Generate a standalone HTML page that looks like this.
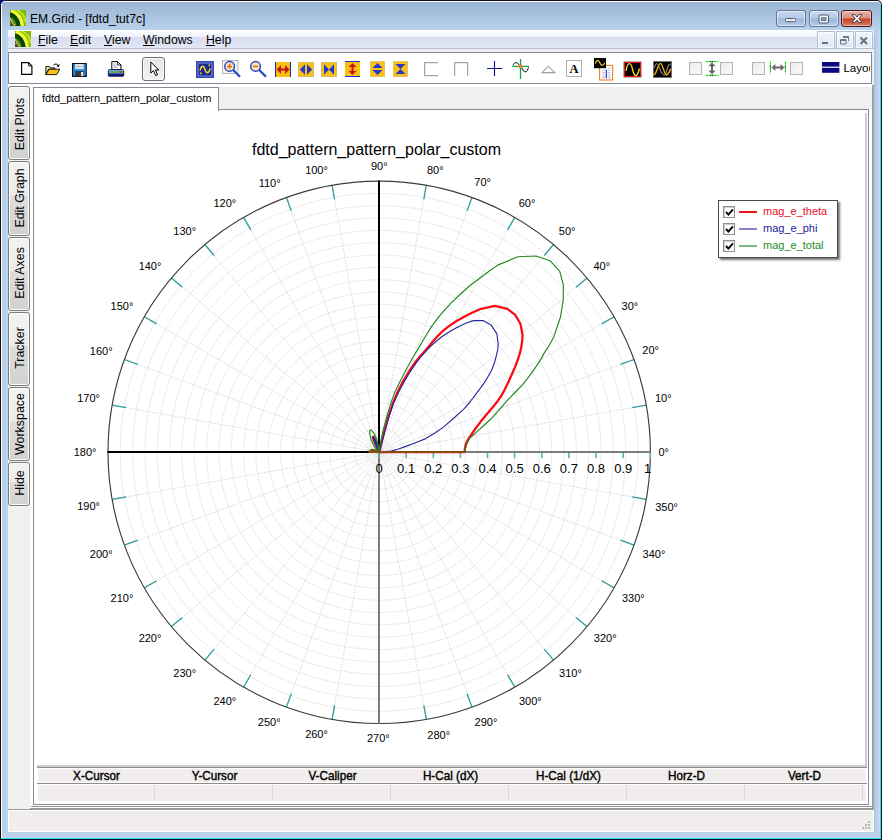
<!DOCTYPE html>
<html lang="en"><head><meta charset="utf-8"><title>EM.Grid - [fdtd_tut7c]</title>
<style>
*{margin:0;padding:0;box-sizing:border-box}
html,body{width:882px;height:840px;overflow:hidden;background:#fff}
body{position:relative;font-family:"Liberation Sans",sans-serif;color:#000}
.a{position:absolute}
#win{left:0;top:0;width:882px;height:840px;background:#111;border-radius:5px 5px 0 0;overflow:hidden}
#tl{left:0;top:0;width:3px;height:4px;background:#000080}
#fr{left:1px;top:1px;width:880px;height:838px;background:#b9d1ea;border-radius:4px 4px 0 0}
#frl{left:1px;top:4px;width:1px;height:834px;background:#fff}
#frt{left:4px;top:1px;width:874px;height:1px;background:#fff}
#frr{left:880px;top:5px;width:1px;height:834px;background:#35d6ff}
#frb{left:1px;top:838px;width:880px;height:1px;background:#35d6ff}
#frlg{left:2px;top:30px;width:6px;height:802px;background:linear-gradient(90deg,#b3cdea,#bfd5ed)}
#frrg{left:874px;top:30px;width:6px;height:802px;background:linear-gradient(90deg,#a9c6e8,#c9dbf0)}
#cap{left:2px;top:2px;width:878px;height:28px;background:linear-gradient(180deg,#99b4d2,#b9d1ea);border-radius:3px 3px 0 0}
#ttl{left:30px;top:12px;font-size:12.15px;line-height:15px;white-space:nowrap;color:#000}
#client{left:8px;top:30px;width:866px;height:802px;background:#f0f0f0}
#menu{left:8px;top:30px;width:866px;height:19px;background:linear-gradient(180deg,#fff 0,#eef1f9 36%,#d8ddf0 37%,#e2e7f6 94%,#b8bccf 95%,#b8bccf 100%)}
.mi{top:33px;font-size:12.25px;line-height:14px;white-space:nowrap}
.mi u{text-decoration:underline;text-underline-offset:1px}
#tb{left:8px;top:52px;width:864px;height:32px;background:#fff;border:1px solid #848993}
#tbw{left:8px;top:84px;width:864px;height:3px;background:#fff}
#rline{left:872px;top:85px;width:2px;height:724px;background:#a0a0a0}
.stab{left:8px;width:22px;border:1px solid #7c7c7c;border-radius:3px;background:linear-gradient(180deg,#f3f3f3 0,#ebebeb 45%,#dedede 47%,#d1d1d1 100%);box-shadow:inset 0 0 0 1px #fbfbfb}
.stab span{position:absolute;left:calc(50% + 1px);top:50%;white-space:nowrap;font-size:12.4px;line-height:14px;transform:translate(-50%,-50%) rotate(-90deg)}
#strip{left:30px;top:87px;width:3px;height:720px;background:#fff}
#tab{left:33px;top:87px;width:186px;height:24px;background:#fff;border:1px solid #868b98;border-bottom:none}
#tabt{left:42px;top:92px;font-size:11px;line-height:13px;white-space:nowrap;letter-spacing:-0.06px}
#pane{left:33px;top:109px;width:836px;height:696px;background:#fff;border:1px solid #868b98}
#panefix{left:34px;top:109px;width:184px;height:2px;background:#fff}
#paner{left:869px;top:109px;width:3px;height:698px;background:#fff}
#paneb{left:30px;top:805px;width:842px;height:3px;background:#fff}
#paneb2{left:31px;top:806px;width:841px;height:1px;background:#929292}
#paneg{left:30px;top:808px;width:844px;height:2px;background:#9a9a9a}
#paneg2{left:8px;top:809px;width:22px;height:1px;background:#9a9a9a}
#vbar{left:865px;top:113px;width:2px;height:654px;background:#cdcdcd}
#sb{left:8px;top:810px;width:866px;height:22px;background:#f0edec;border:1px solid #fff}
#grip i{position:absolute;width:2px;height:2px;background:#b8b8b8}
/* cursor table */
#ct1{left:37px;top:765px;width:830px;height:2px;background:#cdcdcd}
#ct2{left:37px;top:767px;width:830px;height:1px;background:#8c8c8c}
#cth{left:38px;top:769px;width:828px;height:13px;background:#f0edec}
#ct3{left:37px;top:783px;width:830px;height:1px;background:#8c8c8c}
#ctr{left:38px;top:785px;width:828px;height:16px;background:#f0edec}
.ch{top:769px;width:118px;text-align:center;font-size:11.7px;line-height:13px;white-space:nowrap;-webkit-text-stroke:.38px #000;transform:translateY(.1px) scaleY(1.08);transform-origin:50% 80%}
.cs{top:785px;width:1px;height:16px;background:#d8d6d5}

#lg{left:718px;top:200px;width:120px;height:58px;background:#fff;border:1px solid #4a4a4a;box-shadow:2px 2px 2px rgba(0,0,0,.55)}
.lc{left:723px;width:12px;height:12px;border:1px solid #8e8f8f;background:#fff;box-shadow:inset 1px 1px 0 #d0d0d0}
.lc svg{position:absolute;left:1px;top:1px}
.ll{left:739px;width:18px}
.lt{left:763px;font-size:11px;line-height:13px;white-space:nowrap}

#ptr{left:142px;top:57px;width:23px;height:24px;border:1px solid #6e6e6e;border-radius:3px;background:linear-gradient(180deg,#e6e6e6,#f2f2f2);box-shadow:inset 0 0 0 1px #fafafa}
.dbx{top:62px;width:13px;height:13px;border:1px solid #b4b4b4;background:linear-gradient(135deg,#ececec,#fafafa)}
#lay{left:843.4px;top:60px;width:27px;overflow:hidden;font-size:11.6px;line-height:15px;white-space:nowrap}
.cb{top:10px;height:17px;border-radius:3px}
.mb{top:31px;width:18px;height:18px;border:1px solid #aebfd6;background:linear-gradient(180deg,#f0f5fc,#dde8f6);box-shadow:inset 0 0 0 1px rgba(255,255,255,.7)}
</style></head>
<body>
<div id="win" class="a"></div><div id="tl" class="a"></div>
<div id="fr" class="a"></div><div id="frl" class="a"></div><div id="frt" class="a"></div><div id="frr" class="a"></div><div id="frb" class="a"></div>
<div id="cap" class="a"></div><div id="frlg" class="a"></div><div id="frrg" class="a"></div>
<div id="client" class="a"></div>
<div id="ttl" class="a">EM.Grid - [fdtd_tut7c]</div>
<div id="menu" class="a"></div>
<div class="a mi" style="left:38px"><u>F</u>ile</div>
<div class="a mi" style="left:70px"><u>E</u>dit</div>
<div class="a mi" style="left:104px"><u>V</u>iew</div>
<div class="a mi" style="left:143px"><u>W</u>indows</div>
<div class="a mi" style="left:206px"><u>H</u>elp</div>
<div id="tb" class="a"></div><div id="tbw" class="a"></div><div id="rline" class="a"></div>
<div class="a stab" style="top:86px;height:74px"><span style="margin-top:0.5px">Edit Plots</span></div>
<div class="a stab" style="top:161px;height:75px"><span style="margin-top:-0.6px">Edit Graph</span></div>
<div class="a stab" style="top:237px;height:74px"><span style="margin-top:-1.5px">Edit Axes</span></div>
<div class="a stab" style="top:312px;height:74px"><span style="margin-top:-1.4px">Tracker</span></div>
<div class="a stab" style="top:387px;height:74px"><span style="margin-top:-0.5px">Workspace</span></div>
<div class="a stab" style="top:462px;height:44px"><span style="margin-top:-1.2px">Hide</span></div>
<div id="strip" class="a"></div>
<div id="pane" class="a"></div><div id="tab" class="a"></div><div id="panefix" class="a"></div><div id="tabt" class="a">fdtd_pattern_pattern_polar_custom</div>
<div id="paner" class="a"></div><div id="paneb" class="a"></div><div id="paneb2" class="a"></div><div id="paneg" class="a"></div><div id="paneg2" class="a"></div><div id="vbar" class="a"></div>
<div id="sb" class="a"></div>
<div id="grip" class="a" style="left:860px;top:819px;width:12px;height:12px"><i style="left:8px;top:2px"></i><i style="left:5px;top:5px"></i><i style="left:8px;top:5px"></i><i style="left:2px;top:8px"></i><i style="left:5px;top:8px"></i><i style="left:8px;top:8px"></i></div>
<div id="ct1" class="a"></div><div id="ct2" class="a"></div><div id="cth" class="a"></div><div id="ct3" class="a"></div><div id="ctr" class="a"></div>
<div class="a ch" style="left:37.5px">X-Cursor</div>
<div class="a cs" style="left:154px"></div>
<div class="a ch" style="left:155.5px">Y-Cursor</div>
<div class="a cs" style="left:272px"></div>
<div class="a ch" style="left:273.5px">V-Caliper</div>
<div class="a cs" style="left:390px"></div>
<div class="a ch" style="left:391.5px">H-Cal (dX)</div>
<div class="a cs" style="left:508px"></div>
<div class="a ch" style="left:509.5px">H-Cal (1/dX)</div>
<div class="a cs" style="left:626px"></div>
<div class="a ch" style="left:627.5px">Horz-D</div>
<div class="a cs" style="left:744px"></div>
<div class="a ch" style="left:745.5px">Vert-D</div>
<div class="a cs" style="left:862px"></div>
<svg class="a" style="left:10px;top:10px" width="16" height="16" viewBox="0 0 16 16" ><defs><linearGradient id="ga" x1="0" y1="1" x2="1" y2="0"><stop offset="0" stop-color="#4a6a0c"/><stop offset=".3" stop-color="#6a8c10"/><stop offset=".6" stop-color="#9acc10"/><stop offset="1" stop-color="#78b000"/></linearGradient></defs><rect width="16" height="16" fill="url(#ga)"/><path d="M0 4.6 Q7.6 6 8.8 16" fill="none" stroke="#064408" stroke-width="4.6"/><path d="M1.2 .4 Q11.6 4.6 12.4 16" fill="none" stroke="#f0fa38" stroke-width="3.4"/><path d="M3.6 0 Q13.4 4.6 14.2 15" fill="none" stroke="#9cc414" stroke-width=".7"/><path d="M7 0 Q15 4 15.8 12" fill="none" stroke="#d4ec30" stroke-width="1.2"/><path d="M0 8.4 L5 16" stroke="#f0f4e8" stroke-width="1.1" stroke-dasharray="1.3 1"/><rect x="0" y="14.4" width="2.4" height="1.6" fill="#3a3a30"/></svg>
<svg class="a" style="left:15px;top:31px" width="16" height="16" viewBox="0 0 16 16" ><defs><linearGradient id="gb" x1="0" y1="1" x2="1" y2="0"><stop offset="0" stop-color="#4a6a0c"/><stop offset=".3" stop-color="#6a8c10"/><stop offset=".6" stop-color="#9acc10"/><stop offset="1" stop-color="#78b000"/></linearGradient></defs><rect width="16" height="16" fill="url(#gb)"/><path d="M0 4.6 Q7.6 6 8.8 16" fill="none" stroke="#064408" stroke-width="4.6"/><path d="M1.2 .4 Q11.6 4.6 12.4 16" fill="none" stroke="#f0fa38" stroke-width="3.4"/><path d="M3.6 0 Q13.4 4.6 14.2 15" fill="none" stroke="#9cc414" stroke-width=".7"/><path d="M7 0 Q15 4 15.8 12" fill="none" stroke="#d4ec30" stroke-width="1.2"/><path d="M0 8.4 L5 16" stroke="#f0f4e8" stroke-width="1.1" stroke-dasharray="1.3 1"/><rect x="0" y="14.4" width="2.4" height="1.6" fill="#3a3a30"/></svg>
<div class="a cb" style="left:776px;width:30px;border:1px solid #62789a;background:linear-gradient(180deg,#c9daef 0,#b6cbe6 46%,#9cb7da 52%,#b4cae7 100%);box-shadow:inset 0 0 0 1px rgba(255,255,255,.5)"></div>
<div class="a cb" style="left:809px;width:30px;border:1px solid #62789a;background:linear-gradient(180deg,#c9daef 0,#b6cbe6 46%,#9cb7da 52%,#b4cae7 100%);box-shadow:inset 0 0 0 1px rgba(255,255,255,.5)"></div>
<div class="a cb" style="left:841px;width:31px;border:1px solid #4a1624;background:linear-gradient(180deg,#eab0a6 0,#dd8e7e 48%,#c4401e 52%,#d97f68 100%);box-shadow:inset 0 0 0 1px rgba(255,255,255,.45)"></div>
<svg class="a" style="left:785px;top:15px" width="12" height="8" viewBox="0 0 12 8" ><rect x=".5" y="3.5" width="10" height="3.2" rx="1" fill="#f4f4f4" stroke="#4a5a74" stroke-width="1"/></svg>
<svg class="a" style="left:818px;top:13.6px" width="12" height="11" viewBox="0 0 12 11" ><rect x="1" y="1" width="9.5" height="8" rx="1" fill="#f4f4f4" stroke="#4a5a74"/><rect x="3.6" y="3.8" width="4.3" height="2.6" fill="#8fa9cc" stroke="#4a5a74" stroke-width=".9"/></svg>
<svg class="a" style="left:850px;top:13px" width="14" height="11" viewBox="0 0 14 11" ><path d="M2 1.5 L5 1.5 L7 4 L9 1.5 L12 1.5 L8.8 5.5 L12 9.5 L9 9.5 L7 7 L5 9.5 L2 9.5 L5.2 5.5 Z" fill="#f6f6f6" stroke="#4a4a5c" stroke-width="1"/></svg>
<div class="a mb" style="left:817px"></div>
<div class="a mb" style="left:836px"></div>
<div class="a mb" style="left:855px"></div>
<svg class="a" style="left:821px;top:40px" width="10" height="6" viewBox="0 0 10 6" ><rect x="1" y="2" width="6" height="2" fill="#6a7080"/></svg>
<svg class="a" style="left:839px;top:35px" width="12" height="11" viewBox="0 0 12 11" ><path d="M4 1.5 H9.5 V6 M1.5 4.5 H7 V9 H1.5 Z M1.5 5.5 H7 M4 2.5 H9.5" fill="none" stroke="#707888" stroke-width="1"/></svg>
<svg class="a" style="left:859px;top:36px" width="10" height="10" viewBox="0 0 10 10" ><path d="M1.5 1.5 L8 8 M8 1.5 L1.5 8" stroke="#6a7080" stroke-width="2"/></svg>
<svg class="a" style="left:21px;top:62px" width="12" height="14" viewBox="0 0 12 14" ><path d="M.6 .6 H7.6 L10.9 3.9 V12.4 H.6 Z" fill="#fff" stroke="#000" stroke-width="1.15"/><path d="M7.6 .6 V3.9 H10.9" fill="none" stroke="#000" stroke-width=".9"/></svg>
<svg class="a" style="left:45px;top:61.6px" width="18" height="16" viewBox="0 0 18 16" ><g transform="scale(.9)"><path d="M1 5 H5 L6 6.5 H11 V8 H4 L1 14 Z" fill="#f8e9a8" stroke="#000" stroke-width="1"/><path d="M1 14 L4.5 8 H16.5 L13 14 Z" fill="#f8c414" stroke="#000" stroke-width="1"/><path d="M9.5 3.5 Q12.5 .5 15 4.3" fill="none" stroke="#000" stroke-width="1.1"/><path d="M16.2 2.2 L15.6 5.6 L12.6 4.6 Z" fill="#000"/></g></svg>
<svg class="a" style="left:72px;top:63px" width="15" height="14" viewBox="0 0 15 14" ><rect x=".6" y=".6" width="13.6" height="12.8" fill="#2296f4" stroke="#0a0a30" stroke-width="1.2"/><rect x="3" y="1" width="8.6" height="5" fill="#e4e4e4"/><rect x="3" y="2.6" width="8.6" height="1.6" fill="#c4c4c4"/><rect x="3" y="8" width="9" height="5.4" fill="#3a3a3a"/><rect x="9.2" y="9" width="2" height="4" fill="#fff"/></svg>
<svg class="a" style="left:107px;top:61px" width="18" height="16" viewBox="0 0 18 16" ><path d="M4.8 .6 H10.6 L14 4 V8.6 H4.8 Z" fill="#fff" stroke="#000" stroke-width="1"/><path d="M10.6 .6 V4 H14" fill="none" stroke="#000" stroke-width=".8"/><path d="M6.4 3 H8.6 M6.4 4.8 H10 M6.4 6.6 H11" stroke="#909090" stroke-width=".8"/><rect x=".8" y="8.2" width="16.4" height="7.5" rx="1.6" fill="#12125e"/><rect x="1.6" y="9" width="14.8" height="1.5" fill="#48b4e4"/><rect x="1.6" y="10.5" width="14.8" height="1.3" fill="#b8d428"/><rect x="1.6" y="11.8" width="14.8" height="1.4" fill="#2868d8"/><rect x="12" y="10.3" width="3" height="1.3" fill="#e83030"/></svg>
<div id="ptr" class="a"></div>
<svg class="a" style="left:150px;top:61px" width="11" height="17" viewBox="0 0 11 17" ><path d="M.8 1 V12 L3.5 9.6 L5.7 14.6 L7.5 13.8 L5.4 9 H8.8 Z" fill="#fff" stroke="#000" stroke-width="1" stroke-linejoin="miter"/></svg>
<svg class="a" style="left:196px;top:61px" width="18" height="17" viewBox="0 0 18 17" ><rect x=".5" y=".5" width="17" height="16" fill="#1c2894" stroke="#3848c8"/><rect x="2" y="2" width="14" height="13" fill="none" stroke="#98a4e8" stroke-width=".9"/><path d="M4 9.5 C5.5 4 7.5 4 9 8.5 S12.5 13 14.2 7.5" fill="none" stroke="#f8e020" stroke-width="1.4"/><rect x="12.5" y="3.5" width="1.6" height="1.6" fill="#f8e020"/><rect x="4" y="11.5" width="1.6" height="1.6" fill="#f8e020"/></svg>
<svg class="a" style="left:222px;top:60px" width="20" height="19" viewBox="0 0 20 19" ><rect x=".5" y=".5" width="15.5" height="13" fill="#f2f2f2" stroke="#b8b8b8"/><circle cx="7.6" cy="6.4" r="4.8" fill="#f8e8c0" stroke="#2a48c0" stroke-width="1.5"/><path d="M5 6.4 H10.2 M7.6 3.8 V9" stroke="#e86810" stroke-width="1.5"/><path d="M11.2 10 L18 16.8" stroke="#2a48c0" stroke-width="2.3"/></svg>
<svg class="a" style="left:248px;top:60px" width="20" height="19" viewBox="0 0 20 19" ><circle cx="7.6" cy="6.4" r="4.8" fill="#f8e8c0" stroke="#2a48c0" stroke-width="1.5"/><path d="M5 6.4 H10.2" stroke="#e86810" stroke-width="1.5"/><path d="M11.2 10 L18 16.8" stroke="#2a48c0" stroke-width="2.3"/></svg>
<svg class="a" style="left:275px;top:62px" width="16" height="15" viewBox="0 0 16 15" ><rect width="16" height="15" fill="#fcc010"/><path d="M.5 0 V15 M15.5 0 V15" stroke="#2030c0" stroke-width="1.2"/><path d="M1.6 7.5 L6 3 V6.4 H10 V3 L14.4 7.5 L10 12 V8.6 H6 V12 Z" fill="#c01818"/></svg>
<svg class="a" style="left:298px;top:62px" width="16" height="15" viewBox="0 0 16 15" ><rect width="16" height="15" fill="#fcc010" stroke="#b8b8b8"/><path d="M7 2.2 V12.8 L1.8 7.5 Z M9 2.2 V12.8 L14.2 7.5 Z" fill="#2438d0"/></svg>
<svg class="a" style="left:321px;top:62px" width="16" height="15" viewBox="0 0 16 15" ><rect width="16" height="15" fill="#fcc010" stroke="#b8b8b8"/><path d="M3 2.2 L8 7.5 L3 12.8 Z M13 2.2 L8 7.5 L13 12.8 Z" fill="#2438d0"/></svg>
<svg class="a" style="left:345px;top:61px" width="15" height="16" viewBox="0 0 15 16" ><rect width="15" height="16" fill="#fcc010"/><path d="M0 .5 H15 M0 15.5 H15" stroke="#2030c0" stroke-width="1.2"/><path d="M7.5 2 L11.5 6 H8.5 V10 H11.5 L7.5 14 L3.5 10 H6.5 V6 H3.5 Z" fill="#c01818"/></svg>
<svg class="a" style="left:370px;top:61px" width="15" height="16" viewBox="0 0 15 16" ><rect width="15" height="16" fill="#fcc010" stroke="#c8c8c8"/><path d="M2.5 7 H12.5 L7.5 2 Z M2.5 9 H12.5 L7.5 14 Z" fill="#2438d0"/></svg>
<svg class="a" style="left:393px;top:61px" width="15" height="16" viewBox="0 0 15 16" ><rect width="15" height="16" fill="#fcc010" stroke="#c8c8c8"/><path d="M2.5 3 L7.5 8 L12.5 3 Z M2.5 13 L7.5 8 L12.5 13 Z" fill="#2438d0"/></svg>
<svg class="a" style="left:424px;top:62px" width="15" height="15" viewBox="0 0 15 15" ><path d="M14 .6 H.6 V13.6 H14" fill="none" stroke="#a4a4a4" stroke-width="1.2"/></svg>
<svg class="a" style="left:454px;top:62px" width="15" height="15" viewBox="0 0 15 15" ><path d="M.6 14 V.6 H13.6 V14" fill="none" stroke="#a4a4a4" stroke-width="1.2"/></svg>
<svg class="a" style="left:487px;top:61px" width="16" height="16" viewBox="0 0 16 16" ><path d="M0 7.5 H15.4 M7.5 0 V15" stroke="#10108c" stroke-width="1.15"/></svg>
<svg class="a" style="left:512px;top:59px" width="18" height="21" viewBox="0 0 18 21" ><path d="M8.5 0 V20 M0 7.4 H17" stroke="#18a048" stroke-width="1.3"/><path d="M1 6 Q3.5 1.5 7 5.5 T11.5 12 Q14.5 15 16.5 8.5" fill="none" stroke="#101010" stroke-width="1"/><rect x="6.8" y="5.6" width="3.4" height="3.4" fill="#f08018"/></svg>
<svg class="a" style="left:541px;top:65px" width="15" height="9" viewBox="0 0 15 9" ><path d="M1 7.6 L7.4 1.2 L13.8 7.6 Z" fill="#fff" stroke="#a0a0a0" stroke-width="1.1"/></svg>
<svg class="a" style="left:566px;top:60px" width="16" height="17" viewBox="0 0 16 17" ><rect x=".5" y=".5" width="15" height="16" fill="#fff" stroke="#b0b0b0"/><text x="8" y="13" font-family="Liberation Serif, serif" font-weight="bold" font-size="12.5" text-anchor="middle" fill="#000">A</text></svg>
<svg class="a" style="left:594px;top:58px" width="20" height="23" viewBox="0 0 20 23" ><rect x="5.6" y="7.4" width="13" height="14.6" fill="#fff" stroke="#f08030" stroke-width="1.1"/><path d="M8 12.5 H11 M8 14.5 H11 M8 16.5 H11 M8 18.5 H11 M8 20 H11 M13.6 10.5 H16.6 M13.6 12.5 H16.6 M13.6 14.5 H16.6 M13.6 16.5 H16.6 M13.6 18.5 H16.6 M13.6 20 H16.6" stroke="#b4bcd4" stroke-width=".8"/><path d="M12.3 11.5 V20.5" stroke="#2030d0" stroke-width="1.1"/><rect x="0" y="0" width="12" height="10.2" fill="#000"/><path d="M1.3 5.6 C2.6 1.4 4.6 1.6 5.8 4.8 S9.4 8.6 10.8 4.6" fill="none" stroke="#f8d020" stroke-width="1.25"/></svg>
<svg class="a" style="left:623px;top:61px" width="19" height="17" viewBox="0 0 19 17" ><rect x=".5" y=".5" width="18" height="16" fill="#808080"/><rect x="1.5" y="1.5" width="16" height="14" fill="#000" stroke="#e01818" stroke-width="1.2"/><path d="M3 10 C4.5 .5 7.8 .5 9.6 8.5 S14.4 17 16.3 7.5" fill="none" stroke="#f8e020" stroke-width="1.3"/></svg>
<svg class="a" style="left:653px;top:61px" width="19" height="17" viewBox="0 0 19 17" ><rect x=".5" y=".5" width="18" height="16" fill="#000" stroke="#707070"/><path d="M1.4 6.5 C2.4 2 4.2 1.6 5.4 4.5 C6.8 8 9.2 14.5 11.6 14 C13.6 13.6 14.6 4 16.3 3.1 L17.7 3.8" fill="none" stroke="#b0b0b0" stroke-width="1"/><path d="M1.4 14 C3.4 12 5.4 2.2 7.5 2.4 C9.6 2.6 11.4 14 13.6 14 C15 14 16.6 10.4 17.7 7.9" fill="none" stroke="#f8b010" stroke-width="1.4"/></svg>
<div class="a dbx" style="left:689px"></div>
<svg class="a" style="left:705px;top:60px" width="14" height="17" viewBox="0 0 14 17" ><path d="M.6 1.6 H13.4 M.6 15.4 H13.4" stroke="#20dc20" stroke-width="1.1" stroke-dasharray="3 .8"/><path d="M5 1.6 H9 M5 15.4 H9" stroke="#203020" stroke-width="1.1" stroke-dasharray="1 1"/><path d="M7 2.4 L10.6 6.2 H8 V10.4 H10.6 L7 14.2 L3.4 10.4 H6 V6.2 H3.4 Z" fill="#686868"/></svg>
<div class="a dbx" style="left:720px"></div>
<div class="a dbx" style="left:752px"></div>
<svg class="a" style="left:769px;top:60px" width="18" height="15" viewBox="0 0 18 15" ><path d="M1.4 1.4 V13.8 M16.4 1.4 V13.8" stroke="#20dc20" stroke-width="1.1" stroke-dasharray="3 .8"/><path d="M1.4 5.5 V9.5 M16.4 5.5 V9.5" stroke="#203020" stroke-width="1.1" stroke-dasharray="1 1"/><path d="M2.6 7.5 L6.4 3.9 V6.5 H11.6 V3.9 L15.4 7.5 L11.6 11.1 V8.5 H6.4 V11.1 Z" fill="#686868"/></svg>
<div class="a dbx" style="left:790px"></div>
<svg class="a" style="left:822px;top:62px" width="18" height="11" viewBox="0 0 18 11" ><rect x="0" y="0" width="17.4" height="4.6" fill="#0a0a80"/><rect x="0" y="5.8" width="17.4" height="5" fill="#0a0a80"/></svg>
<div id="lay" class="a">Layout</div>
<svg class="a" id="plot" style="left:0;top:0" width="882" height="840" viewBox="0 0 882 840" font-family="Liberation Sans, sans-serif">
<g fill="none" stroke="#d2d2d2" stroke-width="1" stroke-dasharray="1 1.15">
<circle cx="379.2" cy="452.3" r="12.33"/>
<circle cx="379.2" cy="452.3" r="24.65"/>
<circle cx="379.2" cy="452.3" r="36.98"/>
<circle cx="379.2" cy="452.3" r="49.31"/>
<circle cx="379.2" cy="452.3" r="61.64"/>
<circle cx="379.2" cy="452.3" r="73.96"/>
<circle cx="379.2" cy="452.3" r="86.29"/>
<circle cx="379.2" cy="452.3" r="98.62"/>
<circle cx="379.2" cy="452.3" r="110.95"/>
<circle cx="379.2" cy="452.3" r="123.27"/>
<circle cx="379.2" cy="452.3" r="135.60"/>
<circle cx="379.2" cy="452.3" r="147.93"/>
<circle cx="379.2" cy="452.3" r="160.25"/>
<circle cx="379.2" cy="452.3" r="172.58"/>
<circle cx="379.2" cy="452.3" r="184.91"/>
<circle cx="379.2" cy="452.3" r="197.24"/>
<circle cx="379.2" cy="452.3" r="209.56"/>
<circle cx="379.2" cy="452.3" r="221.89"/>
<circle cx="379.2" cy="452.3" r="234.22"/>
<circle cx="379.2" cy="452.3" r="246.55"/>
<circle cx="379.2" cy="452.3" r="258.87"/>
<line x1="379.2" y1="452.3" x2="646.3" y2="405.2"/>
<line x1="379.2" y1="452.3" x2="634.0" y2="359.5"/>
<line x1="379.2" y1="452.3" x2="614.1" y2="316.7"/>
<line x1="379.2" y1="452.3" x2="587.0" y2="278.0"/>
<line x1="379.2" y1="452.3" x2="553.5" y2="244.5"/>
<line x1="379.2" y1="452.3" x2="514.8" y2="217.4"/>
<line x1="379.2" y1="452.3" x2="472.0" y2="197.5"/>
<line x1="379.2" y1="452.3" x2="426.3" y2="185.2"/>
<line x1="379.2" y1="452.3" x2="332.1" y2="185.2"/>
<line x1="379.2" y1="452.3" x2="286.4" y2="197.5"/>
<line x1="379.2" y1="452.3" x2="243.6" y2="217.4"/>
<line x1="379.2" y1="452.3" x2="204.9" y2="244.5"/>
<line x1="379.2" y1="452.3" x2="171.4" y2="278.0"/>
<line x1="379.2" y1="452.3" x2="144.3" y2="316.7"/>
<line x1="379.2" y1="452.3" x2="124.4" y2="359.5"/>
<line x1="379.2" y1="452.3" x2="112.1" y2="405.2"/>
<line x1="379.2" y1="452.3" x2="112.1" y2="499.4"/>
<line x1="379.2" y1="452.3" x2="124.4" y2="545.1"/>
<line x1="379.2" y1="452.3" x2="144.3" y2="587.9"/>
<line x1="379.2" y1="452.3" x2="171.4" y2="626.6"/>
<line x1="379.2" y1="452.3" x2="204.9" y2="660.1"/>
<line x1="379.2" y1="452.3" x2="243.6" y2="687.2"/>
<line x1="379.2" y1="452.3" x2="286.4" y2="707.1"/>
<line x1="379.2" y1="452.3" x2="332.1" y2="719.4"/>
<line x1="379.2" y1="452.3" x2="426.3" y2="719.4"/>
<line x1="379.2" y1="452.3" x2="472.0" y2="707.1"/>
<line x1="379.2" y1="452.3" x2="514.8" y2="687.2"/>
<line x1="379.2" y1="452.3" x2="553.5" y2="660.1"/>
<line x1="379.2" y1="452.3" x2="587.0" y2="626.6"/>
<line x1="379.2" y1="452.3" x2="614.1" y2="587.9"/>
<line x1="379.2" y1="452.3" x2="634.0" y2="545.1"/>
<line x1="379.2" y1="452.3" x2="646.3" y2="499.4"/>
</g>
<g stroke="#2f9c9c" stroke-width="1.3">
<line x1="632.2" y1="407.7" x2="646.3" y2="405.2"/>
<line x1="620.6" y1="364.4" x2="634.0" y2="359.5"/>
<line x1="601.7" y1="323.9" x2="614.1" y2="316.7"/>
<line x1="576.0" y1="287.2" x2="587.0" y2="278.0"/>
<line x1="544.3" y1="255.5" x2="553.5" y2="244.5"/>
<line x1="507.6" y1="229.8" x2="514.8" y2="217.4"/>
<line x1="467.1" y1="210.9" x2="472.0" y2="197.5"/>
<line x1="423.8" y1="199.3" x2="426.3" y2="185.2"/>
<line x1="334.6" y1="199.3" x2="332.1" y2="185.2"/>
<line x1="291.3" y1="210.9" x2="286.4" y2="197.5"/>
<line x1="250.8" y1="229.8" x2="243.6" y2="217.4"/>
<line x1="214.1" y1="255.5" x2="204.9" y2="244.5"/>
<line x1="182.4" y1="287.2" x2="171.4" y2="278.0"/>
<line x1="156.7" y1="323.9" x2="144.3" y2="316.7"/>
<line x1="137.8" y1="364.4" x2="124.4" y2="359.5"/>
<line x1="126.2" y1="407.7" x2="112.1" y2="405.2"/>
<line x1="126.2" y1="496.9" x2="112.1" y2="499.4"/>
<line x1="137.8" y1="540.2" x2="124.4" y2="545.1"/>
<line x1="156.7" y1="580.8" x2="144.3" y2="587.9"/>
<line x1="182.4" y1="617.4" x2="171.4" y2="626.6"/>
<line x1="214.1" y1="649.1" x2="204.9" y2="660.1"/>
<line x1="250.7" y1="674.8" x2="243.6" y2="687.2"/>
<line x1="291.3" y1="693.7" x2="286.4" y2="707.1"/>
<line x1="334.6" y1="705.3" x2="332.1" y2="719.4"/>
<line x1="423.8" y1="705.3" x2="426.3" y2="719.4"/>
<line x1="467.1" y1="693.7" x2="472.0" y2="707.1"/>
<line x1="507.6" y1="674.8" x2="514.8" y2="687.2"/>
<line x1="544.3" y1="649.1" x2="553.5" y2="660.1"/>
<line x1="576.0" y1="617.4" x2="587.0" y2="626.6"/>
<line x1="601.7" y1="580.8" x2="614.1" y2="587.9"/>
<line x1="620.6" y1="540.2" x2="634.0" y2="545.1"/>
<line x1="632.2" y1="496.9" x2="646.3" y2="499.4"/>
</g>
<circle cx="379.2" cy="452.3" r="271.2" fill="none" stroke="#3c3c3c" stroke-width="1.15"/>
<line x1="107.4" y1="452.0" x2="380.0" y2="452.0" stroke="#000" stroke-width="2"/>
<line x1="379.0" y1="180.5" x2="379.0" y2="453.0" stroke="#000" stroke-width="2"/>
<line x1="380.0" y1="452.0" x2="650.7" y2="452.0" stroke="#7c7c7c" stroke-width="2"/>
<line x1="379.0" y1="453.0" x2="379.0" y2="723.8" stroke="#7c7c7c" stroke-width="2"/>
<g stroke="#5fb3b3" stroke-width="1.6">
<line x1="379.0" y1="453" x2="379.0" y2="458.2"/>
<line x1="406.1" y1="453" x2="406.1" y2="458.2"/>
<line x1="433.3" y1="453" x2="433.3" y2="458.2"/>
<line x1="460.4" y1="453" x2="460.4" y2="458.2"/>
<line x1="487.5" y1="453" x2="487.5" y2="458.2"/>
<line x1="514.6" y1="453" x2="514.6" y2="458.2"/>
<line x1="541.8" y1="453" x2="541.8" y2="458.2"/>
<line x1="568.9" y1="453" x2="568.9" y2="458.2"/>
<line x1="596.0" y1="453" x2="596.0" y2="458.2"/>
<line x1="623.2" y1="453" x2="623.2" y2="458.2"/>
<line x1="650.3" y1="453" x2="650.3" y2="458.2"/>
</g>
<g font-size="13" fill="#000" text-anchor="middle">
<text x="379.0" y="472.6">0</text>
<text x="406.1" y="472.6">0.1</text>
<text x="433.3" y="472.6">0.2</text>
<text x="460.4" y="472.6">0.3</text>
<text x="487.5" y="472.6">0.4</text>
<text x="514.6" y="472.6">0.5</text>
<text x="541.8" y="472.6">0.6</text>
<text x="568.9" y="472.6">0.7</text>
<text x="596.0" y="472.6">0.8</text>
<text x="623.2" y="472.6">0.9</text>
<text x="651.2" y="472.6" text-anchor="end">1</text>
</g>
<polyline points="379.0,452.0 464.5,452.0 464.9,448.5 465.9,443.8 468.6,438.6 474.5,430.0 481.4,420.7 487.0,414.0 492.9,407.1 497.3,401.5 501.4,395.7 505.2,388.5 508.6,381.4 512.0,374.0 515.0,367.1 517.7,360.0 520.0,352.9 521.5,346.0 522.3,340.0 522.5,334.3 520.4,323.8 515.2,314.9 507.3,308.8 494.9,305.9 481.1,308.8 473.0,312.3 465.6,316.0 457.0,320.8 448.6,326.4 443.0,330.8 438.1,335.6 432.0,342.5 426.3,349.4 420.8,355.5 415.7,361.6 409.0,371.5 402.9,381.6 397.7,392.0 392.9,403.0 388.3,417.0 384.3,431.4 381.7,442.0 379.9,450.0 379.0,452.0 377.4,448.5 375.4,444.0 373.6,439.5 372.9,437.0 373.6,436.7 375.3,440.0 377.3,446.0 379.0,452.0 375.0,450.6 371.5,450.6 379.0,452.0" fill="none" stroke="#fa0a14" stroke-width="2.25" stroke-linejoin="round"/>
<polyline points="379.0,452.0 391.4,451.1 398.5,449.0 405.7,446.4 415.5,442.7 425.7,438.6 435.0,433.0 444.3,426.4 454.5,417.5 464.3,408.6 470.0,402.0 475.7,394.3 480.2,388.3 484.3,382.9 488.4,376.0 492.1,369.3 494.5,362.5 496.4,355.7 497.7,349.5 498.2,343.5 496.8,333.6 491.0,324.9 483.1,320.5 473.5,320.6 467.0,322.8 460.4,325.8 453.7,329.3 447.3,333.0 441.8,336.8 436.8,340.8 432.0,345.0 427.6,349.4 422.0,355.5 417.1,361.6 410.3,371.5 404.2,381.6 398.7,392.0 393.7,403.0 388.9,417.0 384.8,431.4 382.0,442.0 380.0,450.0 379.0,452.0 377.4,448.5 375.4,444.0 373.6,439.5 372.9,437.0 373.6,436.7 375.3,440.0 377.3,446.0 379.0,452.0" fill="none" stroke="#2a2aa0" stroke-width="1.15" stroke-linejoin="round"/>
<polyline points="379.0,452.0 464.7,452.0 465.2,449.0 467.1,443.0 470.5,437.5 475.7,432.9 483.0,426.3 490.7,419.3 499.0,410.0 507.1,400.7 515.0,392.5 522.9,384.3 529.5,375.8 535.7,367.1 540.2,360.4 544.3,352.9 549.5,345.0 553.8,336.9 560.4,317.3 563.2,300.2 563.4,285.2 559.7,271.2 549.9,260.7 536.1,256.0 517.8,256.8 498.2,264.9 489.0,271.2 480.0,278.0 470.0,285.5 460.5,294.0 451.2,302.9 441.0,314.2 431.6,326.4 424.5,338.0 417.8,349.4 412.9,357.3 406.0,370.0 399.3,383.0 395.0,392.0 391.4,401.4 387.0,416.0 382.9,431.4 380.6,442.0 379.3,450.0 379.0,452.0 377.4,450.6 374.3,446.7 371.2,440.0 369.6,433.0 369.9,430.4 371.4,430.0 374.3,433.8 376.7,439.0 378.3,446.7 379.0,452.0 376.0,450.3 372.5,449.2 369.8,450.0 368.5,451.8 379.0,452.0" fill="none" stroke="#1f8a1f" stroke-width="1.15" stroke-linejoin="round"/>
<line x1="369" y1="452.0" x2="464.6" y2="452.0" stroke="#8b4a12" stroke-width="2.2"/>
<g font-size="11" fill="#000">
<text x="658.5" y="456.0" text-anchor="start">0°</text>
<text x="654.9" y="401.7" text-anchor="start">10°</text>
<text x="642.3" y="354.4" text-anchor="start">20°</text>
<text x="621.6" y="310.0" text-anchor="start">30°</text>
<text x="593.5" y="269.9" text-anchor="start">40°</text>
<text x="558.8" y="235.2" text-anchor="start">50°</text>
<text x="518.7" y="207.1" text-anchor="start">60°</text>
<text x="474.3" y="186.4" text-anchor="start">70°</text>
<text x="427.0" y="173.8" text-anchor="start">80°</text>
<text x="379.3" y="169.8" text-anchor="middle">90°</text>
<text x="327.9" y="174.0" text-anchor="end">100°</text>
<text x="280.6" y="186.6" text-anchor="end">110°</text>
<text x="236.2" y="207.3" text-anchor="end">120°</text>
<text x="196.1" y="235.4" text-anchor="end">130°</text>
<text x="161.4" y="270.1" text-anchor="end">140°</text>
<text x="133.3" y="310.2" text-anchor="end">150°</text>
<text x="112.6" y="354.6" text-anchor="end">160°</text>
<text x="100.0" y="401.9" text-anchor="end">170°</text>
<text x="96.5" y="456.0" text-anchor="end">180°</text>
<text x="100.0" y="510.3" text-anchor="end">190°</text>
<text x="112.6" y="557.6" text-anchor="end">200°</text>
<text x="133.3" y="602.0" text-anchor="end">210°</text>
<text x="161.4" y="642.1" text-anchor="end">220°</text>
<text x="196.1" y="676.8" text-anchor="end">230°</text>
<text x="236.2" y="704.9" text-anchor="end">240°</text>
<text x="280.6" y="725.6" text-anchor="end">250°</text>
<text x="327.9" y="738.2" text-anchor="end">260°</text>
<text x="378.3" y="742.3" text-anchor="middle">270°</text>
<text x="427.3" y="738.5" text-anchor="start">280°</text>
<text x="474.6" y="725.9" text-anchor="start">290°</text>
<text x="519.0" y="705.2" text-anchor="start">300°</text>
<text x="559.1" y="677.1" text-anchor="start">310°</text>
<text x="593.8" y="642.4" text-anchor="start">320°</text>
<text x="621.9" y="602.3" text-anchor="start">330°</text>
<text x="642.6" y="557.9" text-anchor="start">340°</text>
<text x="655.2" y="510.6" text-anchor="start">350°</text>
</g>
<text x="376.5" y="155" font-size="16" text-anchor="middle" fill="#000">fdtd_pattern_pattern_polar_custom</text>
</svg>
<div id="lg" class="a"></div>
<div class="a lc" style="top:206px"><svg width="9" height="9" viewBox="0 0 9 9"><path d="M1 4 L3.4 6.6 L8 1.4" fill="none" stroke="#000" stroke-width="1.9"/></svg></div>
<div class="a ll" style="top:211px;height:2px;background:#f2121c"></div>
<div class="a lt" style="top:205px;color:#e8101a">mag_e_theta</div>
<div class="a lc" style="top:223px"><svg width="9" height="9" viewBox="0 0 9 9"><path d="M1 4 L3.4 6.6 L8 1.4" fill="none" stroke="#000" stroke-width="1.9"/></svg></div>
<div class="a ll" style="top:228px;height:2px;background:#8484c8"></div>
<div class="a lt" style="top:222px;color:#1c1c9c">mag_e_phi</div>
<div class="a lc" style="top:240px"><svg width="9" height="9" viewBox="0 0 9 9"><path d="M1 4 L3.4 6.6 L8 1.4" fill="none" stroke="#000" stroke-width="1.9"/></svg></div>
<div class="a ll" style="top:245px;height:2px;background:#7cba7c"></div>
<div class="a lt" style="top:239px;color:#1e8a1e">mag_e_total</div>
</body></html>
